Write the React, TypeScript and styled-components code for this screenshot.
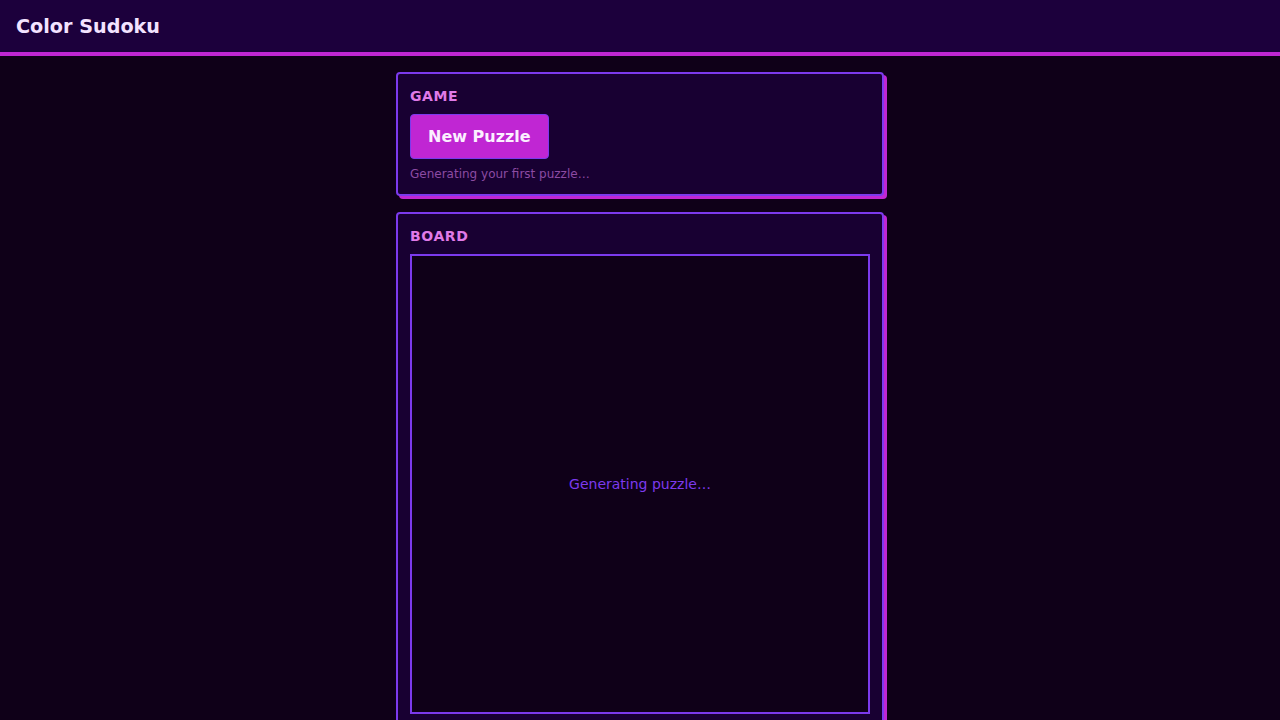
import React from 'react';
import styled, { createGlobalStyle } from 'styled-components';

const GlobalStyle = createGlobalStyle`
  html, body {
    margin: 0;
    padding: 0;
    background: #0f0018;
    font-family: "DejaVu Sans", Verdana, sans-serif;
  }
`;

const Page = styled.div`
  min-height: 100vh;
  background: #0f0018;
`;

const Header = styled.header`
  background: #1c003c;
  border-bottom: 4px solid #c026d3;
  padding: 16px 16px 14px;
`;

const Title = styled.h1`
  margin: 0;
  font-size: 1.2rem;
  line-height: 22px;
  font-weight: bold;
  color: #f3e3ff;
`;

const Main = styled.main`
  max-width: 488px;
  margin: 0 auto;
  padding: 16px 0;
  display: flex;
  flex-direction: column;
  gap: 16px;
`;

const Card = styled.section`
  background: #180032;
  border: 2px solid #7c3aed;
  border-radius: 4px;
  box-shadow: 3px 3px 0 #c026d3;
  padding: 14px 12px 13px;
`;

const CardLabel = styled.h2`
  margin: 0 0 10px;
  font-size: 14px;
  font-weight: bold;
  letter-spacing: 0.6px;
  text-transform: uppercase;
  color: #e07ae8;
`;

const Button = styled.button`
  font-family: inherit;
  font-size: 16px;
  font-weight: bold;
  color: #fbefff;
  background: #c026d3;
  border: 1px solid #7c3aed;
  border-radius: 4px;
  padding: 12px 17px;
  cursor: pointer;
`;

const Hint = styled.p`
  margin: 8px 0 0;
  font-size: 12px;
  color: #8c4ba3;
`;

const Board = styled.div<{ $size: number }>`
  width: ${p => p.$size}px;
  height: ${p => p.$size}px;
  box-sizing: border-box;
  border: 2px solid #7c3aed;
  background: #0f0018;
  display: flex;
  align-items: center;
  justify-content: center;
  font-size: 14px;
  color: #7c3aed;
`;

export default function App() {
  return (
    <Page>
      <GlobalStyle />
      <Header>
        <Title>Color Sudoku</Title>
      </Header>
      <Main>
        <Card>
          <CardLabel>Game</CardLabel>
          <Button>New Puzzle</Button>
          <Hint>Generating your first puzzle…</Hint>
        </Card>
        <Card>
          <CardLabel>Board</CardLabel>
          <Board $size={460}>Generating puzzle…</Board>
        </Card>
      </Main>
    </Page>
  );
}
